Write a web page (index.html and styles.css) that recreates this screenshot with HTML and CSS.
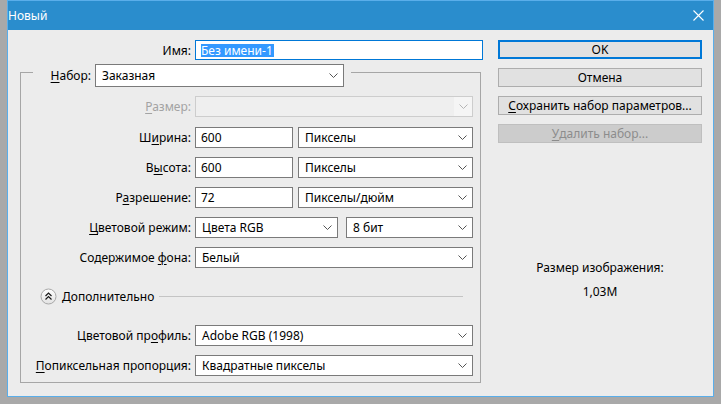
FILE: index.html
```html
<!DOCTYPE html>
<html lang="ru">
<head>
<meta charset="utf-8">
<title>Новый</title>
<link rel="stylesheet" href="styles.css">
</head>
<body>
<div class="window">
  <div class="titlebar">
    <span class="title">Новый</span>
    <svg class="close" width="11" height="11" viewBox="0 0 11 11"><path d="M0.5 0.5L10.5 10.5M10.5 0.5L0.5 10.5" stroke="#fff" stroke-width="1.1" fill="none"/></svg>
  </div>
  <div class="main">
    <div class="left">
      <div class="name-row">
        <span class="lbl name-lbl">Имя:</span>
        <div class="input focused"><span class="hl">Без имени-1</span></div>
      </div>
      <fieldset class="group">
        <legend class="preset">
          <div class="preset-inner">
            <span class="lbl preset-lbl"><u>Н</u>абор:</span>
            <div class="select preset-sel"><span>Заказная</span><svg class="chev" width="9" height="5" viewBox="0 0 9 5"><path d="M0.5 0.5L4.5 4.5L8.5 0.5"/></svg></div>
          </div>
        </legend>
        <div class="rows">
          <div class="row size-row">
            <span class="lbl dis"><u>Р</u>азмер:</span>
            <div class="select disabled"><span></span><span class="chev-box"><svg class="chev" width="9" height="5" viewBox="0 0 9 5"><path d="M0.5 0.5L4.5 4.5L8.5 0.5"/></svg></span></div>
          </div>
          <div class="row">
            <span class="lbl">Ш<u>и</u>рина:</span>
            <div class="ctrl">
              <div class="input num">600</div>
              <div class="select grow"><span>Пикселы</span><svg class="chev" width="9" height="5" viewBox="0 0 9 5"><path d="M0.5 0.5L4.5 4.5L8.5 0.5"/></svg></div>
            </div>
          </div>
          <div class="row">
            <span class="lbl">В<u>ы</u>сота:</span>
            <div class="ctrl">
              <div class="input num">600</div>
              <div class="select grow"><span>Пикселы</span><svg class="chev" width="9" height="5" viewBox="0 0 9 5"><path d="M0.5 0.5L4.5 4.5L8.5 0.5"/></svg></div>
            </div>
          </div>
          <div class="row">
            <span class="lbl">Р<u>а</u>зрешение:</span>
            <div class="ctrl">
              <div class="input num">72</div>
              <div class="select grow"><span>Пикселы/дюйм</span><svg class="chev" width="9" height="5" viewBox="0 0 9 5"><path d="M0.5 0.5L4.5 4.5L8.5 0.5"/></svg></div>
            </div>
          </div>
          <div class="row">
            <span class="lbl"><u>Ц</u>ветовой режим:</span>
            <div class="ctrl wide-gap">
              <div class="select mode"><span>Цвета RGB</span><svg class="chev" width="9" height="5" viewBox="0 0 9 5"><path d="M0.5 0.5L4.5 4.5L8.5 0.5"/></svg></div>
              <div class="select grow"><span>8 бит</span><svg class="chev" width="9" height="5" viewBox="0 0 9 5"><path d="M0.5 0.5L4.5 4.5L8.5 0.5"/></svg></div>
            </div>
          </div>
          <div class="row">
            <span class="lbl">Содержимое <u>ф</u>она:</span>
            <div class="select"><span>Белый</span><svg class="chev" width="9" height="5" viewBox="0 0 9 5"><path d="M0.5 0.5L4.5 4.5L8.5 0.5"/></svg></div>
          </div>
          <div class="advanced">
            <svg class="adv-icon" width="17" height="17" viewBox="0 0 17 17">
              <defs><linearGradient id="g" x1="0" y1="0" x2="0" y2="1"><stop offset="0" stop-color="#ffffff"/><stop offset="1" stop-color="#e2e2e2"/></linearGradient></defs>
              <circle cx="8.5" cy="8.5" r="7.5" fill="url(#g)" stroke="#a8a8a8"/>
              <path d="M5.5 8L8.5 5L11.5 8M5.5 11.5L8.5 8.5L11.5 11.5" fill="none" stroke="#1a1a1a" stroke-width="1.2"/>
            </svg>
            <span class="adv-text">Дополнительно</span>
            <span class="adv-line"></span>
          </div>
          <div class="row profile-row">
            <span class="lbl">Цветовой пр<u>о</u>филь:</span>
            <div class="select"><span>Adobe RGB (1998)</span><svg class="chev" width="9" height="5" viewBox="0 0 9 5"><path d="M0.5 0.5L4.5 4.5L8.5 0.5"/></svg></div>
          </div>
          <div class="row">
            <span class="lbl"><u>П</u>опиксельная пропорция:</span>
            <div class="select"><span>Квадратные пикселы</span><svg class="chev" width="9" height="5" viewBox="0 0 9 5"><path d="M0.5 0.5L4.5 4.5L8.5 0.5"/></svg></div>
          </div>
        </div>
      </fieldset>
    </div>
    <div class="right">
      <div class="btn default">OK</div>
      <div class="btn">Отмена</div>
      <div class="btn"><u>С</u>охранить набор параметров...</div>
      <div class="btn off"><u>У</u>далить набор...</div>
      <div class="info">
        <div>Размер изображения:</div>
        <div class="info-val">1,03M</div>
      </div>
    </div>
  </div>
</div>
</body>
</html>
```

FILE: styles.css
```css
html, body {
  margin: 0;
  padding: 0;
}
body {
  width: 721px;
  height: 404px;
  overflow: hidden;
  background: #a9a9a9;
  font-family: "Noto Sans", "Open Sans", sans-serif;
  font-size: 12px;
  color: #000;
}
u {
  text-decoration-thickness: 1px;
  text-underline-offset: 2px;
}
.window {
  margin-left: 7px;
  width: 707px;
  height: 397px;
  box-sizing: border-box;
  border: 1px solid #5aaeea;
  border-top: none;
  background: #ececec;
}
.titlebar {
  height: 30px;
  background: #2a8dcd;
  border-top: 1px solid #5aaeea;
  box-sizing: border-box;
  display: flex;
  align-items: center;
  justify-content: space-between;
  padding: 0 9px 0 0;
  color: #fff;
}
.title {
  font-size: 12px;
}
.main {
  display: flex;
  padding: 10px 0 0 12px;
}
.left {
  width: 463px;
}
.right {
  width: 204px;
  margin-left: 15px;
  display: flex;
  flex-direction: column;
  gap: 9px;
}
.lbl {
  text-align: right;
  white-space: nowrap;
}
.lbl.dis {
  color: #a3a3a3;
}
.name-row {
  display: flex;
  align-items: center;
  gap: 4px;
  height: 20px;
}
.name-lbl {
  width: 171px;
}
.input {
  height: 20px;
  box-sizing: border-box;
  border: 1px solid #7a7a7a;
  background: #fff;
  display: flex;
  align-items: center;
  padding-left: 5px;
  white-space: nowrap;
}
.input.focused {
  width: 288px;
  border-color: #0078d7;
}
.hl {
  background: #3399ff;
  color: #fff;
  line-height: 13px;
  height: 13px;
  padding: 0 1px 0 0;
}
.input.num {
  width: 98px;
  height: 21px;
}
.group {
  margin: -3px 0 0 0;
  width: 461px;
  box-sizing: border-box;
  border: 1px solid #a6a6a6;
  padding: 9px 7px 6px 12px;
  min-width: 0;
}
.preset {
  padding: 7px 7px 0 0;
  margin: 0;
}
.preset-inner {
  display: flex;
  align-items: center;
  gap: 4px;
}
.preset-lbl {
  width: 58px;
}
.select {
  height: 21px;
  box-sizing: border-box;
  border: 1px solid #7a7a7a;
  background: #fff;
  display: flex;
  align-items: center;
  justify-content: space-between;
  padding: 0 5px 0 6px;
  white-space: nowrap;
}
.select.preset-sel {
  width: 249px;
  height: 23px;
}
.chev {
  fill: none;
  stroke: #555;
  stroke-width: 1;
}
.select.disabled {
  background: #efefef;
  border-color: #cdcdcd;
  padding: 0;
}
.chev-box {
  width: 18px;
  height: 19px;
  background: #f5f5f5;
  display: flex;
  align-items: center;
  justify-content: center;
}
.select.disabled .chev {
  stroke: #b5b5b5;
}
.rows {
  display: flex;
  flex-direction: column;
  gap: 9px;
}
.row {
  display: grid;
  grid-template-columns: 158px 278px;
  column-gap: 4px;
  align-items: center;
  height: 21px;
}
.size-row {
  margin-bottom: 1px;
}
.ctrl {
  display: flex;
  gap: 5px;
}
.ctrl.wide-gap {
  gap: 8px;
}
.grow {
  flex: 1;
}
.select.mode {
  width: 143px;
}
.advanced {
  display: flex;
  align-items: center;
  height: 17px;
  margin-top: 11px;
  padding-left: 7px;
}
.adv-icon {
  display: block;
}
.adv-text {
  margin-left: 5px;
}
.adv-line {
  flex: 1;
  height: 1px;
  background: #c4c4c4;
  margin: 0 10px 0 5px;
}
.profile-row {
  margin-top: 11px;
}
.btn {
  height: 19px;
  box-sizing: border-box;
  border: 1px solid #adadad;
  background: #e1e1e1;
  display: flex;
  align-items: center;
  justify-content: center;
  white-space: nowrap;
}
.btn.default {
  border: 2px solid #0078d7;
}
.btn.off {
  background: #cccccc;
  border-color: #bfbfbf;
  color: #8c8c8c;
}
.info {
  margin-top: 108px;
  text-align: center;
  line-height: 16px;
}
.info-val {
  margin-top: 8px;
}
```
